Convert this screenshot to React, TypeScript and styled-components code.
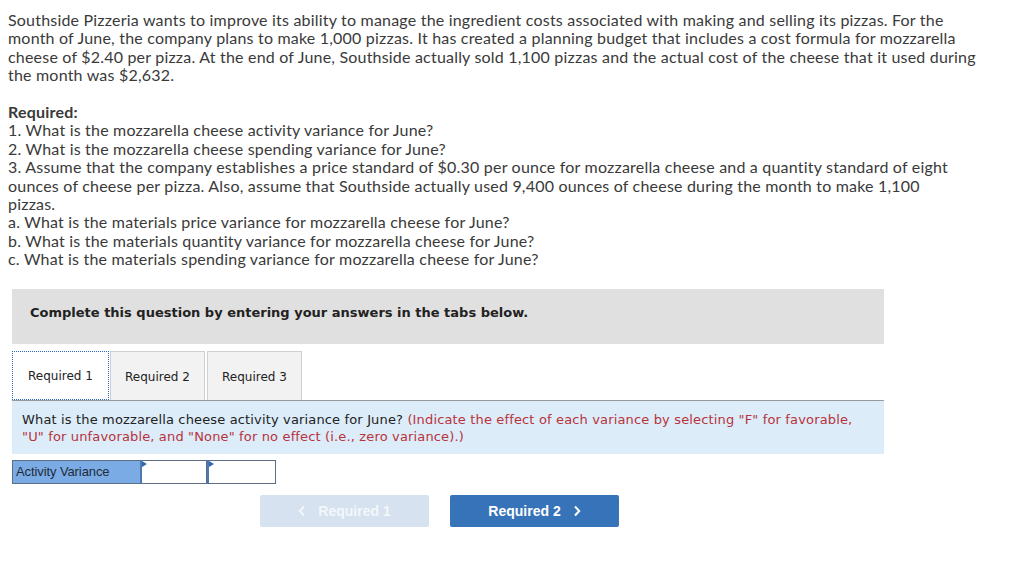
import React from "react";
import styled, { createGlobalStyle } from "styled-components";

const GlobalStyle = createGlobalStyle`
  body {
    margin: 0;
    background: #fff;
  }
`;

const Page = styled.div`
  width: 1024px;
  padding: 11px 0 0 8px;
  box-sizing: border-box;
`;

const Intro = styled.div`
  font-family: Lato, "Open Sans", sans-serif;
  font-size: 16px;
  letter-spacing: 0.2px;
  line-height: 18.4px;
  color: #3a3a3a;
  white-space: nowrap;
`;

const Para = styled.p`
  margin: 0 0 18.4px;
`;

const ReqTitle = styled.div`
  font-weight: 700;
`;

const Panel = styled.div`
  margin: 20px 0 0 4px;
  width: 872px;
  font-family: "DejaVu Sans", Verdana, sans-serif;
`;

const Instructions = styled.div`
  height: 55px;
  box-sizing: border-box;
  background: #e0e0e0;
  display: flex;
  align-items: center;
  padding: 0 0 8px 18px;
  font-size: 13px;
  font-weight: 700;
  color: #222;
`;

const Tabs = styled.div`
  display: flex;
  margin-top: 7px;
  height: 49px;
`;

const Tab = styled.div<{ $active?: boolean }>`
  display: flex;
  align-items: center;
  justify-content: center;
  padding-top: 2px;
  width: ${(p) => (p.$active ? "97px" : "95px")};
  box-sizing: border-box;
  font-size: 12px;
  color: #222;
  background: ${(p) => (p.$active ? "#fff" : "#f2f2f2")};
  border: ${(p) => (p.$active ? "1px dotted #2a66c4" : "1px solid #cfcfcf")};
  border-bottom: ${(p) => (p.$active ? "1px dotted #2a66c4" : "none")};
  & + & {
    margin-left: 1px;
  }
  & + & + & {
    margin-left: 2px;
  }
`;

const Question = styled.div`
  background: #dcecf9;
  border-top: 1px solid #999;
  height: 54px;
  box-sizing: border-box;
  padding: 10px 10px 0;
  font-size: 13px;
  letter-spacing: 0.15px;
  line-height: 17px;
  color: #222;
  white-space: nowrap;
`;

const Hint = styled.span`
  color: #b8333b;
`;

const AnswerRow = styled.div`
  display: flex;
  margin-top: 6px;
  height: 24px;
`;

const RowLabel = styled.div`
  width: 128px;
  box-sizing: border-box;
  background: #7aabe4;
  border: 1px solid #5b6e86;
  border-right: none;
  display: flex;
  align-items: center;
  padding-left: 3px;
  font-family: "Liberation Sans", Arial, sans-serif;
  font-size: 13px;
  letter-spacing: -0.1px;
  color: #1e2b3a;
`;

const Cell = styled.div<{ $w: number }>`
  position: relative;
  width: ${(p) => p.$w}px;
  box-sizing: border-box;
  background: #fff;
  border: 1px solid #5b6e86;
  border-left: 2px solid #4d79b3;
  &::before {
    content: "";
    position: absolute;
    top: 0;
    left: 0;
    border-top: 3px solid transparent;
    border-bottom: 3px solid transparent;
    border-left: 5px solid #2f69b5;
  }
`;

const Nav = styled.div`
  display: flex;
  gap: 21px;
  margin: 11px 0 0 248px;
`;

const NavButton = styled.div<{ $primary?: boolean }>`
  width: 169px;
  height: 32px;
  border-radius: 2px;
  display: flex;
  align-items: center;
  justify-content: center;
  gap: 12px;
  font-family: "Liberation Sans", Arial, sans-serif;
  font-size: 14px;
  font-weight: 700;
  color: ${(p) => (p.$primary ? "#fff" : "#f3f7fb")};
  background: ${(p) => (p.$primary ? "#3773b8" : "#d6e2f0")};
  svg {
    display: block;
  }
`;

const Chevron = ({ left }: { left?: boolean }) => (
  <svg width="8" height="12" viewBox="0 0 8 12">
    <path
      d={left ? "M6 1.5 L1.8 6 L6 10.5" : "M2 1.5 L6.2 6 L2 10.5"}
      fill="none"
      stroke="currentColor"
      strokeWidth="2"
    />
  </svg>
);

export default function App() {
  return (
    <Page>
      <GlobalStyle />
      <Intro>
        <Para>
          Southside Pizzeria wants to improve its ability to manage the ingredient costs associated with making and selling its pizzas. For the
          <br />
          month of June, the company plans to make 1,000 pizzas. It has created a planning budget that includes a cost formula for mozzarella
          <br />
          cheese of $2.40 per pizza. At the end of June, Southside actually sold 1,100 pizzas and the actual cost of the cheese that it used during
          <br />
          the month was $2,632.
        </Para>
        <ReqTitle>Required:</ReqTitle>
        <div>1. What is the mozzarella cheese activity variance for June?</div>
        <div>2. What is the mozzarella cheese spending variance for June?</div>
        <div>
          3. Assume that the company establishes a price standard of $0.30 per ounce for mozzarella cheese and a quantity standard of eight
          <br />
          ounces of cheese per pizza. Also, assume that Southside actually used 9,400 ounces of cheese during the month to make 1,100
          <br />
          pizzas.
        </div>
        <div>a. What is the materials price variance for mozzarella cheese for June?</div>
        <div>b. What is the materials quantity variance for mozzarella cheese for June?</div>
        <div>c. What is the materials spending variance for mozzarella cheese for June?</div>
      </Intro>
      <Panel>
        <Instructions>Complete this question by entering your answers in the tabs below.</Instructions>
        <Tabs>
          <Tab $active>Required 1</Tab>
          <Tab>Required 2</Tab>
          <Tab>Required 3</Tab>
        </Tabs>
        <Question>
          What is the mozzarella cheese activity variance for June?{" "}
          <Hint>
            (Indicate the effect of each variance by selecting "F" for favorable,
            <br />
            "U" for unfavorable, and "None" for no effect (i.e., zero variance).)
          </Hint>
        </Question>
        <AnswerRow>
          <RowLabel>Activity Variance</RowLabel>
          <Cell $w={67} />
          <Cell $w={69} />
        </AnswerRow>
        <Nav>
          <NavButton>
            <Chevron left />
            Required 1
          </NavButton>
          <NavButton $primary>
            Required 2
            <Chevron />
          </NavButton>
        </Nav>
      </Panel>
    </Page>
  );
}
